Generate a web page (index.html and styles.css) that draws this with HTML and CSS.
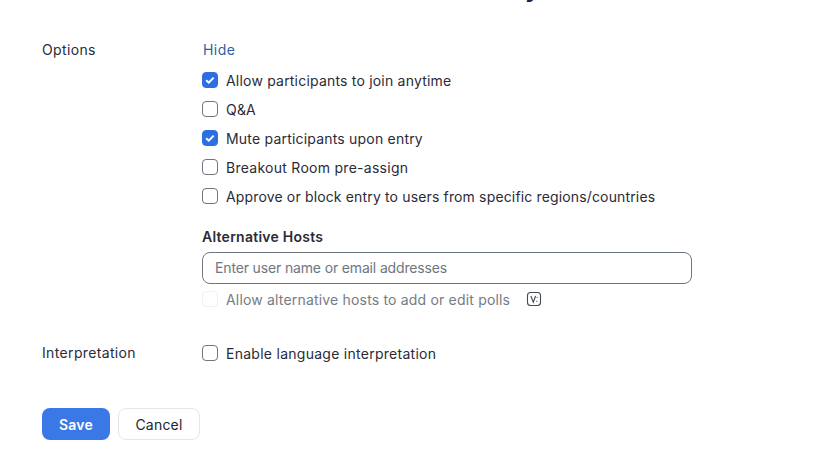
FILE: index.html
```html
<!DOCTYPE html>
<html lang="en">
<head>
    <meta charset="UTF-8">
    <meta name="viewport" content="width=device-width, initial-scale=1.0">
    <title>Schedule Meeting</title>
    <link rel="stylesheet" href="styles.css">
</head>
<body>
    <div class="cut-title">Today</div>

    <div class="row row-options">
        <div class="row-label">Options</div>
        <div class="row-body">
            <a class="hide-link" href="#">Hide</a>
            <div class="check-list">
                <label class="check"><span class="box on"><svg viewBox="0 0 16 16"><path d="M3.6 8.2l3 2.8 5.6-5.8"/></svg></span>Allow participants to join anytime</label>
                <label class="check"><span class="box"></span>Q&amp;A</label>
                <label class="check"><span class="box on"><svg viewBox="0 0 16 16"><path d="M3.6 8.2l3 2.8 5.6-5.8"/></svg></span>Mute participants upon entry</label>
                <label class="check wide"><span class="box"></span>Breakout Room pre-assign</label>
                <label class="check tight"><span class="box"></span>Approve or block entry to users from specific regions/countries</label>
            </div>
            <div class="alt-hosts">
                <div class="alt-title">Alternative Hosts</div>
                <input class="alt-input" type="text" placeholder="Enter user name or email addresses">
                <label class="check disabled">
                    <span class="box"></span>Allow alternative hosts to add or edit polls
                    <svg class="poll-icon" viewBox="0 0 16 16"><rect x="1.5" y="1.5" width="13" height="13" rx="3"/><path d="M4.8 5l2.5 6.2L9.6 5M11.2 6.2v.9M10.8 9.8v.9"/></svg>
                </label>
            </div>
        </div>
    </div>

    <div class="row row-interp">
        <div class="row-label">Interpretation</div>
        <div class="row-body">
            <label class="check wide"><span class="box"></span>Enable language interpretation</label>
        </div>
    </div>

    <div class="actions">
        <button class="btn btn-save">Save</button>
        <button class="btn btn-cancel">Cancel</button>
    </div>
</body>
</html>
```

FILE: styles.css
```css
html, body {
    height: 459px;
    overflow: hidden;
}

body {
    margin: 0;
    padding: 0 0 0 42px;
    font-family: 'Inter', 'Liberation Sans', sans-serif;
    font-size: 14px;
    color: #2b2b38;
    background-color: #ffffff;
    letter-spacing: 0.2px;
}

/* page title scrolled off the top, only the tail of the y is left */
.cut-title {
    height: 0;
    margin-left: 425px;
    margin-top: -11px;
    font-size: 24px;
    font-weight: 700;
    line-height: 0;
    color: #232333;
    white-space: nowrap;
}

.row {
    display: flex;
}

.row-options {
    margin-top: 51px;
}

.row-interp {
    margin-top: 34px;
}

.row-label {
    width: 160px;
    line-height: 20px;
    flex-shrink: 0;
    letter-spacing: 0.35px;
}

.row-body {
    width: 490px;
}

.hide-link {
    display: block;
    margin-left: 1px;
    line-height: 20px;
    color: #2d5fa8;
    text-decoration: none;
    letter-spacing: 0.45px;
}

.check-list {
    margin-top: 10px;
    display: flex;
    flex-direction: column;
    gap: 9px;
}

.check {
    display: flex;
    align-items: center;
    height: 20px;
    white-space: nowrap;
}

.check.wide {
    letter-spacing: 0.27px;
}

.check.tight {
    letter-spacing: 0.15px;
}

.box {
    width: 16px;
    height: 16px;
    margin-right: 8px;
    border: 1px solid #6e7680;
    border-radius: 4px;
    flex-shrink: 0;
    box-sizing: border-box;
    background-color: #fff;
}

.box.on {
    background-color: #2d6fe0;
    border-color: #2d6fe0;
}

.box svg {
    display: block;
    width: 14px;
    height: 14px;
    fill: none;
    stroke: #fff;
    stroke-width: 2.2;
}

.alt-hosts {
    margin-top: 21px;
}

.alt-title {
    font-weight: 600;
    line-height: 20px;
    letter-spacing: 0.25px;
}

.alt-input {
    display: block;
    width: 100%;
    height: 32px;
    margin-top: 5px;
    padding: 0 12px 2px;
    box-sizing: border-box;
    border: 1px solid #6e7680;
    border-radius: 8px;
    font-family: inherit;
    font-size: 14px;
    letter-spacing: -0.15px;
}

.alt-input::placeholder {
    color: #6e7680;
    opacity: 1;
}

.check.disabled {
    margin-top: 5px;
    color: #747c85;
    letter-spacing: 0.18px;
}

.check.disabled .box {
    border-color: #f0f1f3;
}

.poll-icon {
    width: 16px;
    height: 16px;
    margin-left: 16px;
    flex-shrink: 0;
    fill: none;
    stroke: #444b53;
    stroke-width: 1.1;
}

.actions {
    display: flex;
    gap: 8px;
    margin-top: 45px;
}

.btn {
    height: 32px;
    border-radius: 8px;
    font-family: inherit;
    font-size: 14px;
    letter-spacing: 0.2px;
    box-sizing: border-box;
}

.btn-save {
    width: 68px;
    border: none;
    background-color: #3b78e7;
    color: #fff;
    font-weight: 600;
}

.btn-cancel {
    width: 82px;
    border: 1px solid #e4e6e9;
    background-color: #fff;
    color: #232333;
}
```
